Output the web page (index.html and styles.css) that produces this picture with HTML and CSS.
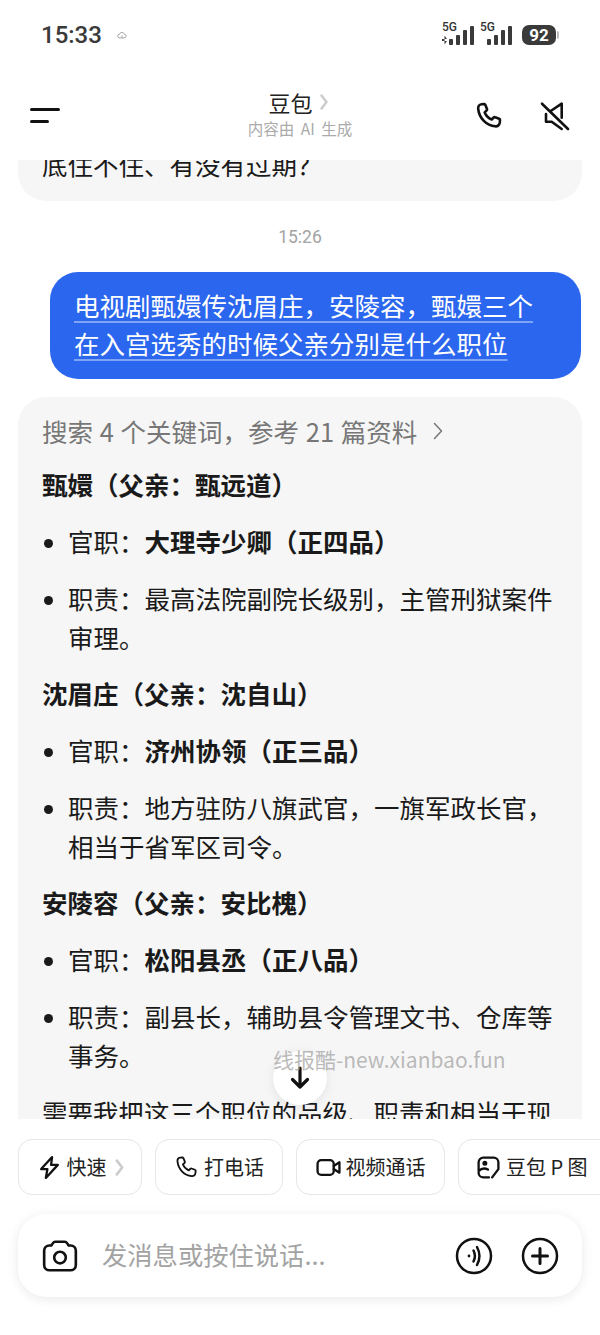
FILE: index.html
```html
<!DOCTYPE html>
<html lang="zh">
<head>
    <meta charset="UTF-8">
    <title>豆包</title>
    <link rel="stylesheet" href="styles.css">
</head>
<body>
<div class="app">
    <div class="status">
        <span class="clock">15:33</span>
        <svg class="cloud" viewBox="0 0 12 12"><path d="M3 9.5a2.2 2.2 0 0 1 0-4.4 3 3 0 0 1 5.8 0 2.2 2.2 0 0 1 0 4.4zM6 7v2.5"/></svg>
        <div class="signals">
            <div class="signal">
                <span class="net">5G</span>
                <div class="bars"><i class="updown"></i><i class="b1"></i><i class="b2"></i><i class="b3"></i><i class="b4"></i></div>
            </div>
            <div class="signal">
                <span class="net">5G</span>
                <div class="bars"><i class="b1"></i><i class="b2"></i><i class="b3"></i><i class="b4"></i></div>
            </div>
            <div class="battery"><span>92</span></div>
            <i class="nub"></i>
        </div>
    </div>

    <div class="nav">
        <div class="menu"><i class="long"></i><i class="short"></i></div>
        <div class="title">
            <div class="name">豆包<svg class="chev" viewBox="0 0 8 16"><path d="M1.5 1.5 6.5 8l-5 6.5"/></svg></div>
            <div class="sub">内容由 AI 生成</div>
        </div>
        <div class="actions">
            <svg class="icon" viewBox="0 0 30 30"><path d="M7.5 3.2 10 3c.6 0 1 .3 1.3.8L13 8c.2.5.1 1-.3 1.4l-2 2c1.3 3.1 3.8 5.7 7 7.1l2-2c.4-.4.9-.5 1.4-.3l4.1 1.500c.6.2.9.8.8 1.400l-.3 2.800c-.3 2.300-2.300 3.800-4.500 3.400C12.400 24.500 5.300 17.400 4.200 8c-.3-2.400 1-4.500 3.300-4.800z"/></svg>
            <svg class="icon" viewBox="0 0 30 30"><path d="M2 2.700 28 28M10.700 10l11-7.300v14M6 13v7.700h5.700l10 7.300"/></svg>
        </div>
    </div>

    <div class="chat">
        <div class="bubble prev">底住不住、有没有过期？</div>
        <div class="time">15:26</div>
        <div class="mine"><span>电视剧甄嬛传沈眉庄，安陵容，甄嬛三个在入宫选秀的时候父亲分别是什么职位</span></div>
        <div class="bubble answer">
            <div class="refs">搜索 4 个关键词，参考 21 篇资料<svg class="refs-arrow" viewBox="0 0 10 18"><path d="M1.5 1.5 8.5 9l-7 7.5"/></svg></div>

            <h3 class="first">甄嬛（父亲：甄远道）</h3>
            <ul>
                <li>官职：<b>大理寺少卿（正四品）</b></li>
                <li>职责：最高法院副院长级别，主管刑狱案件审理。</li>
            </ul>

            <h3>沈眉庄（父亲：沈自山）</h3>
            <ul>
                <li>官职：<b>济州协领（正三品）</b></li>
                <li>职责：地方驻防八旗武官，一旗军政长官，相当于省军区司令。</li>
            </ul>

            <h3>安陵容（父亲：安比槐）</h3>
            <ul>
                <li>官职：<b>松阳县丞（正八品）</b></li>
                <li>职责：副县长，辅助县令管理文书、仓库等事务。</li>
            </ul>

            <p>需要我把这三个职位的品级、职责和相当于现</p>
        </div>
    </div>

    <div class="down">
        <svg viewBox="0 0 24 24"><path d="M12 2v19M4.5 13.5 12 21l7.5-7.5"/></svg>
    </div>
    <div class="mark">线报酷-new.xianbao.fun</div>

    <div class="chips">
        <div class="chip c1">
            <svg viewBox="0 0 24 24"><path d="M14.5 2 4 13.500h6L8.500 22 20 9.500h-6.500z"/></svg>
            快速<svg class="chev" viewBox="0 0 8 16"><path d="M1.5 1.5 6.5 8l-5 6.5"/></svg>
        </div>
        <div class="chip c2">
            <svg viewBox="0 0 30 30"><path d="M7.5 3.2 10 3c.6 0 1 .3 1.3.8L13 8c.2.5.1 1-.3 1.400l-2 2c1.300 3.100 3.800 5.700 7 7.100l2-2c.4-.4.900-.5 1.400-.3l4.100 1.500c.6.2.9.8.8 1.400l-.3 2.800c-.3 2.300-2.300 3.800-4.500 3.400C12.400 24.500 5.300 17.400 4.200 8c-.3-2.400 1-4.500 3.300-4.800z"/></svg>
            打电话
        </div>
        <div class="chip c3">
            <svg viewBox="0 0 24 24"><rect x="1.5" y="5" width="15.5" height="14" rx="3.5"/><path d="M17 10.500 22.500 7v10L17 13.500"/></svg>
            视频通话
        </div>
        <div class="chip c4">
            <svg viewBox="0 0 24 24"><path d="M12.500 21.500H7A4.500 4.500 0 0 1 2.500 17V7A4.500 4.500 0 0 1 7 2.500h10A4.500 4.500 0 0 1 21.500 7v6.500M2.500 15.500c2.500-2.500 5.500-3.500 9-1.500M21.500 13.500l-6 8"/><circle cx="8.5" cy="8" r="1.3"/></svg>
            豆包 P 图
        </div>
    </div>

    <div class="input">
        <svg class="cam" viewBox="0 0 36 36"><path d="M13.500 4.500h9c1 0 1.700.5 2.200 1.300l1.500 2.200h1.800a5 5 0 0 1 5 5v13.500a5 5 0 0 1-5 5H8a5 5 0 0 1-5-5V13a5 5 0 0 1 5-5h1.800l1.500-2.200c.5-.8 1.200-1.300 2.200-1.300z"/><circle cx="18" cy="19.5" r="5.5"/></svg>
        <span class="hint">发消息或按住说话...</span>
        <svg class="round" viewBox="0 0 38 38"><circle cx="19" cy="19" r="17"/><path d="M18.500 13.500c1.800 3.500 1.800 7.500 0 11M22 10c3 5.500 3 12.500 0 18"/><circle class="dot" cx="14" cy="19" r="1.4"/></svg>
        <svg class="round" viewBox="0 0 38 38"><circle cx="19" cy="19" r="17"/><path class="plus" d="M19 11.500v15M11.500 19h15"/></svg>
    </div>
</div>
</body>
</html>
```

FILE: styles.css
```css
* {
    box-sizing: border-box;
}

html, body {
    margin: 0;
    padding: 0;
}

body {
    background: #fff;
    color: #1a1a1a;
    font-family: "Noto Sans CJK SC", "Noto Sans", sans-serif;
}

svg {
    display: block;
    fill: none;
    stroke: #111;
    stroke-width: 2;
    stroke-linecap: round;
    stroke-linejoin: round;
    flex: none;
}

.app {
    position: relative;
    display: flex;
    flex-direction: column;
    width: 600px;
    height: 1335px;
    overflow: hidden;
}

/* status bar */
.status {
    display: flex;
    align-items: center;
    height: 70px;
    padding: 0 41px;
}

.clock {
    font-family: "Roboto", sans-serif;
    font-size: 24px;
    font-weight: 500;
    color: #3a3a3a;
}

.cloud {
    width: 10px;
    height: 10px;
    margin-left: 15px;
    stroke: #999;
    stroke-width: 1;
}

.signals {
    display: flex;
    align-items: center;
    margin-left: auto;
}

.signal {
    position: relative;
    display: flex;
    align-items: flex-end;
    justify-content: flex-end;
    width: 32px;
    height: 21px;
    margin: 0 6px 2px 0;
}

.signal + .signal {
    margin-right: 10px;
}

.net {
    position: absolute;
    top: -4px;
    left: 0;
    font-family: "Roboto", sans-serif;
    font-size: 12px;
    font-weight: 500;
    color: #333;
}

.bars {
    display: flex;
    align-items: flex-end;
    gap: 3px;
}

.bars i {
    display: block;
    width: 4px;
    background: #3a3a3a;
    border-radius: 1px;
}

.bars .updown {
    width: 5px;
    height: 9px;
    margin-right: -1px;
    background: #3a3a3a;
    border-radius: 0;
    clip-path: polygon(50% 0, 100% 38%, 0 38%, 0 62%, 100% 62%, 50% 100%);
}

.bars .b1 { height: 6px; }
.bars .b2 { height: 10px; }
.bars .b3 { height: 15px; }
.bars .b4 { height: 19px; }

.battery {
    display: flex;
    align-items: center;
    justify-content: center;
    width: 34px;
    height: 20px;
    border-radius: 7px;
    background: #3a3a3a;
    color: #fff;
    font-family: "Roboto", sans-serif;
    font-size: 17px;
    font-weight: 700;
}

.nub {
    width: 2px;
    height: 8px;
    margin-left: 1px;
    border-radius: 0 2px 2px 0;
    background: #bbb;
}

/* header */
.nav {
    display: grid;
    grid-template-columns: 1fr auto 1fr;
    align-items: center;
    height: 90px;
    padding: 0 30px;
}

.menu i {
    display: block;
    height: 3px;
    border-radius: 2px;
    background: #111;
}

.menu .long {
    width: 30px;
    margin-bottom: 9px;
}

.menu .short {
    width: 19px;
}

.title {
    margin-top: -5px;
    text-align: center;
}

.name {
    display: flex;
    align-items: center;
    justify-content: center;
    gap: 7px;
    padding-right: 4px;
    font-size: 22px;
    line-height: 30px;
    color: #222;
}

.chev {
    width: 8px;
    height: 16px;
    stroke: #ccc;
    stroke-width: 2.5;
}

.sub {
    font-size: 15.5px;
    line-height: 22px;
    word-spacing: 3px;
    color: #aaa;
}

.actions {
    display: flex;
    justify-content: flex-end;
    gap: 36px;
    margin-top: 1px;
}

.icon {
    width: 30px;
    height: 30px;
    stroke-width: 2.6;
}

/* messages */
.chat {
    display: flex;
    flex-direction: column;
    height: 959px;
    padding: 0 18px;
    overflow: hidden;
}

.bubble {
    width: 564px;
    background: #f6f6f6;
    border-radius: 28px;
    padding: 0 24px;
    font-size: 25.5px;
    line-height: 39px;
}

.prev {
    flex: none;
    height: 41px;
    line-height: 7px;
    border-radius: 0 0 28px 28px;
    overflow: hidden;
}

.time {
    flex: none;
    margin-top: 24px;
    text-align: center;
    font-family: "Roboto", sans-serif;
    font-size: 17.5px;
    line-height: 24px;
    color: #a3a3a3;
}

.mine {
    flex: none;
    align-self: flex-end;
    width: 531px;
    height: 107px;
    margin-top: 23px;
    margin-right: 1px;
    padding: 14px 46px 0 24px;
    border-radius: 28px;
    background: #2b66ee;
    color: #fff;
    font-size: 25.5px;
    line-height: 38px;
}

.mine span {
    text-decoration: underline;
    text-decoration-color: rgba(255, 255, 255, 0.4);
    text-decoration-thickness: 2px;
    text-underline-offset: 5px;
}

.answer {
    flex: none;
    margin-top: 18px;
    padding-top: 14px;
    padding-bottom: 30px;
}

.refs {
    display: flex;
    align-items: center;
    word-spacing: 1px;
    color: #777;
}

.refs-arrow {
    width: 10px;
    height: 18px;
    margin-left: 16px;
    stroke: #777;
    stroke-width: 1.5;
}

h3 {
    margin: 17px 0 0;
    font-size: 25.5px;
    font-weight: 700;
    line-height: 39px;
}

h3.first {
    margin-top: 14px;
}

ul {
    margin: 0;
    padding: 0 0 0 26px;
}

li {
    margin-top: 18px;
}

li::marker {
    font-size: 22px;
}

p {
    margin: 18px 0 0;
    white-space: nowrap;
}

/* floating bits over the chat */
.down {
    position: absolute;
    left: 273px;
    top: 1051px;
    display: flex;
    align-items: center;
    justify-content: center;
    width: 54px;
    height: 54px;
    border-radius: 50%;
    background: #fff;
    box-shadow: 0 2px 12px rgba(0, 0, 0, 0.08);
}

.down svg {
    width: 24px;
    height: 24px;
    stroke-width: 3.2;
}

.mark {
    position: absolute;
    left: 273px;
    top: 1045px;
    font-size: 21px;
    line-height: 28px;
    color: rgba(165, 165, 165, 0.75);
}

/* shortcut chips */
.chips {
    display: flex;
    gap: 13px;
    margin-top: 20px;
    padding-left: 18px;
}

.chip {
    display: flex;
    flex: none;
    align-items: center;
    justify-content: center;
    gap: 5px;
    height: 56px;
    border: 1.5px solid #e6e6e6;
    border-radius: 14px;
    font-size: 20px;
    line-height: 26px;
    color: #222;
}

.chip svg {
    width: 25px;
    height: 25px;
    stroke-width: 2.2;
}

.chip .chev {
    width: 9px;
    height: 17px;
    margin-left: 3px;
    stroke-width: 2.5;
}

.c1 { width: 124px; }
.c2 { width: 128px; }
.c3 { width: 149px; }
.c4 { width: 170px; justify-content: flex-start; padding-left: 17px; }

/* input */
.input {
    display: flex;
    align-items: center;
    width: 564px;
    height: 83px;
    margin: 19px 0 0 18px;
    padding: 0 23px;
    border-radius: 28px;
    background: #fff;
    box-shadow: 0 2px 12px rgba(0, 0, 0, 0.09);
}

.cam {
    width: 38px;
    height: 38px;
    stroke-width: 2.5;
}

.hint {
    flex: 1;
    margin: 0 0 4px 23px;
    font-size: 25.3px;
    color: #a3a3a3;
}

.round {
    width: 38px;
    height: 38px;
    margin-left: 28px;
    stroke-width: 2.5;
}

.round .dot {
    fill: #111;
    stroke: none;
}

.round .plus {
    stroke-width: 3;
}
```
